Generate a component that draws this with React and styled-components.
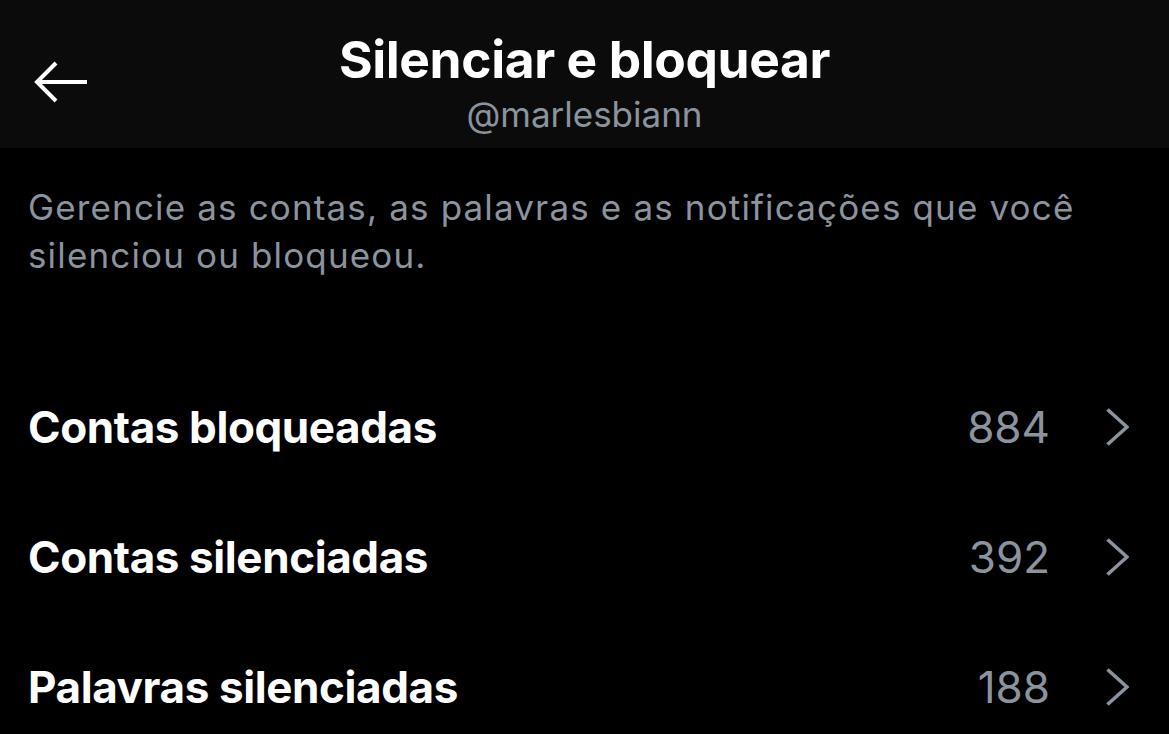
import React from "react";
import styled, { createGlobalStyle } from "styled-components";

const Global = createGlobalStyle`
  html, body { margin: 0; padding: 0; background: #000; }
  body { font-family: "Inter", "Roboto", "Liberation Sans", sans-serif; -webkit-font-smoothing: antialiased; }
`;

const Page = styled.div`
  width: 1169px;
  height: 734px;
  background: #000;
  overflow: hidden;
  display: flex;
  flex-direction: column;
`;

const Header = styled.header`
  flex-shrink: 0;
  box-sizing: border-box;
  height: 148px;
  padding-top: 33px;
  background: #0b0b0b;
  display: grid;
  grid-template-columns: 1fr auto 1fr;
  align-items: start;
`;

const BackButton = styled.div`
  display: flex;
  align-items: center;
  padding-left: 34px;
  padding-top: 27px;
  color: #fff;
`;

const TitleBlock = styled.div`
  display: flex;
  flex-direction: column;
  align-items: center;
`;

const Title = styled.h1`
  margin: 0;
  font-size: 51.5px;
  font-weight: 700;
  color: #fff;
  line-height: 52px;
  letter-spacing: -0.4px;
`;

const Handle = styled.div`
  font-size: 35px;
  color: #8b949e;
  line-height: 44px;
  margin-top: 7px;
`;

const Description = styled.p`
  flex-shrink: 0;
  margin: 0;
  padding: 35px 28px 0;
  font-size: 35px;
  line-height: 48px;
  letter-spacing: 1.15px;
  color: #8b949e;
`;

const List = styled.div`
  margin-top: 83px;
  display: flex;
  flex-direction: column;
`;

const Row = styled.div`
  flex-shrink: 0;
  height: 130px;
  display: flex;
  align-items: center;
  padding: 0 40px 0 28px;
`;

const Label = styled.div`
  flex: 1;
  font-size: 44px;
  font-weight: 700;
  color: #fff;
  letter-spacing: -0.4px;
`;

const Count = styled.div`
  font-size: 44px;
  color: #8b949e;
  margin-right: 55px;
`;

const Arrow = () => (
  <svg width="54" height="44" viewBox="0 0 54 44" fill="none">
    <path d="M4 22H53M22 3L3 22L22 41" stroke="#fff" strokeWidth="4" strokeLinecap="butt" />
  </svg>
);

const Chevron = () => (
  <svg width="24" height="38" viewBox="0 0 24 38" fill="none">
    <path d="M2.5 1.5L22 19L2.5 36.5" stroke="#8b949e" strokeWidth="3.6" />
  </svg>
);

const rows = [
  { label: "Contas bloqueadas", count: 884 },
  { label: "Contas silenciadas", count: 392 },
  { label: "Palavras silenciadas", count: 188 },
];

export default function App() {
  return (
    <Page>
      <Global />
      <Header>
        <BackButton>
          <Arrow />
        </BackButton>
        <TitleBlock>
          <Title>Silenciar e bloquear</Title>
          <Handle>@marlesbiann</Handle>
        </TitleBlock>
        <div />
      </Header>
      <Description>
        Gerencie as contas, as palavras e as notificações que você silenciou ou bloqueou.
      </Description>
      <List>
        {rows.map((r) => (
          <Row key={r.label}>
            <Label>{r.label}</Label>
            <Count>{r.count}</Count>
            <Chevron />
          </Row>
        ))}
      </List>
    </Page>
  );
}
